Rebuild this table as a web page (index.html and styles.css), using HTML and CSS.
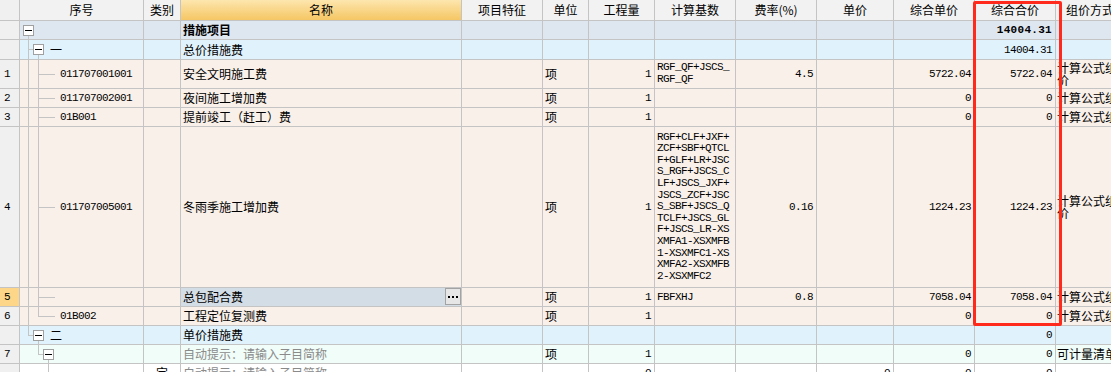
FILE: index.html
```html
<!DOCTYPE html>
<html lang="zh-CN">
<head>
<meta charset="utf-8">
<title>措施项目</title>
<link rel="stylesheet" href="styles.css">
</head>
<body>
<div class="grid">
  <div class="row hd">
    <div class="c rn"></div>
    <div class="c ctr">序号</div>
    <div class="c ctr">类别</div>
    <div class="c ctr hname">名称</div>
    <div class="c ctr">项目特征</div>
    <div class="c ctr">单位</div>
    <div class="c ctr">工程量</div>
    <div class="c ctr">计算基数</div>
    <div class="c ctr">费率(%)</div>
    <div class="c ctr">单价</div>
    <div class="c ctr">综合单价</div>
    <div class="c ctr">综合合价</div>
    <div class="c ctr">组价方式</div>
  </div>

  <div class="row lv0">
    <div class="c rn"></div>
    <div class="c sn"><i class="s bx dn"><b></b></i></div>
    <div class="c"></div>
    <div class="c"><strong>措施项目</strong></div>
    <div class="c"></div><div class="c"></div><div class="c"></div><div class="c"></div><div class="c"></div><div class="c"></div><div class="c"></div>
    <div class="c r m bold">14004.31</div>
    <div class="c zj"></div>
  </div>

  <div class="row lv1 h20">
    <div class="c rn"></div>
    <div class="c sn"><i class="s t"></i><i class="s bx dn"><b></b></i><span class="tx gt">一</span></div>
    <div class="c"></div>
    <div class="c">总价措施费</div>
    <div class="c"></div><div class="c"></div><div class="c"></div><div class="c"></div><div class="c"></div><div class="c"></div><div class="c"></div>
    <div class="c r m">14004.31</div>
    <div class="c zj"></div>
  </div>

  <div class="row it h29">
    <div class="c rn m">1</div>
    <div class="c sn"><i class="s v"></i><i class="s t"></i><i class="h"></i><span class="tx m">011707001001</span></div>
    <div class="c"></div>
    <div class="c">安全文明施工费</div>
    <div class="c"></div>
    <div class="c">项</div>
    <div class="c r m">1</div>
    <div class="c m"><span class="calc">RGF_QF+JSCS_RGF_QF</span></div>
    <div class="c r m">4.5</div>
    <div class="c"></div>
    <div class="c r m">5722.04</div>
    <div class="c r m">5722.04</div>
    <div class="c zj wrap">计算公式组价</div>
  </div>

  <div class="row it">
    <div class="c rn m">2</div>
    <div class="c sn"><i class="s v"></i><i class="s t"></i><i class="h"></i><span class="tx m">011707002001</span></div>
    <div class="c"></div>
    <div class="c">夜间施工增加费</div>
    <div class="c"></div>
    <div class="c">项</div>
    <div class="c r m">1</div>
    <div class="c"></div><div class="c"></div><div class="c"></div>
    <div class="c r m">0</div>
    <div class="c r m">0</div>
    <div class="c zj">计算公式组价</div>
  </div>

  <div class="row it">
    <div class="c rn m">3</div>
    <div class="c sn"><i class="s v"></i><i class="s t"></i><i class="h"></i><span class="tx m">01B001</span></div>
    <div class="c"></div>
    <div class="c">提前竣工（赶工）费</div>
    <div class="c"></div>
    <div class="c">项</div>
    <div class="c r m">1</div>
    <div class="c"></div><div class="c"></div><div class="c"></div>
    <div class="c r m">0</div>
    <div class="c r m">0</div>
    <div class="c zj">计算公式组价</div>
  </div>

  <div class="row it h161">
    <div class="c rn m">4</div>
    <div class="c sn"><i class="s v"></i><i class="s t"></i><i class="h"></i><span class="tx m">011707005001</span></div>
    <div class="c"></div>
    <div class="c">冬雨季施工增加费</div>
    <div class="c"></div>
    <div class="c">项</div>
    <div class="c r m">1</div>
    <div class="c m"><span class="calc">RGF+CLF+JXF+ZCF+SBF+QTCLF+GLF+LR+JSCS_RGF+JSCS_CLF+JSCS_JXF+JSCS_ZCF+JSCS_SBF+JSCS_QTCLF+JSCS_GLF+JSCS_LR-XSXMFA1-XSXMFB1-XSXMFC1-XSXMFA2-XSXMFB2-XSXMFC2</span></div>
    <div class="c r m">0.16</div>
    <div class="c"></div>
    <div class="c r m">1224.23</div>
    <div class="c r m">1224.23</div>
    <div class="c zj wrap">计算公式组价</div>
  </div>

  <div class="row it">
    <div class="c rn m sel">5</div>
    <div class="c sn"><i class="s v"></i><i class="s t"></i><i class="h"></i></div>
    <div class="c"></div>
    <div class="c cur"><span>总包配合费</span><button class="more" type="button"><i></i><i></i><i></i></button></div>
    <div class="c"></div>
    <div class="c">项</div>
    <div class="c r m">1</div>
    <div class="c m">FBFXHJ</div>
    <div class="c r m">0.8</div>
    <div class="c"></div>
    <div class="c r m">7058.04</div>
    <div class="c r m">7058.04</div>
    <div class="c zj">计算公式组价</div>
  </div>

  <div class="row it">
    <div class="c rn m">6</div>
    <div class="c sn"><i class="s v"></i><i class="s l"></i><i class="h"></i><span class="tx m">01B002</span></div>
    <div class="c"></div>
    <div class="c">工程定位复测费</div>
    <div class="c"></div>
    <div class="c">项</div>
    <div class="c r m">1</div>
    <div class="c"></div><div class="c"></div><div class="c"></div>
    <div class="c r m">0</div>
    <div class="c r m">0</div>
    <div class="c zj">计算公式组价</div>
  </div>

  <div class="row lv1">
    <div class="c rn"></div>
    <div class="c sn"><i class="s l"></i><i class="s bx dn"><b></b></i><span class="tx gt">二</span></div>
    <div class="c"></div>
    <div class="c">单价措施费</div>
    <div class="c"></div><div class="c"></div><div class="c"></div><div class="c"></div><div class="c"></div><div class="c"></div><div class="c"></div>
    <div class="c r m">0</div>
    <div class="c zj"></div>
  </div>

  <div class="row sub">
    <div class="c rn m">7</div>
    <div class="c sn"><i class="s"></i><i class="s l"></i><i class="s bx dn"><b></b></i></div>
    <div class="c"></div>
    <div class="c hint">自动提示：请输入子目简称</div>
    <div class="c"></div>
    <div class="c">项</div>
    <div class="c r m">1</div>
    <div class="c"></div><div class="c"></div><div class="c"></div>
    <div class="c r m">0</div>
    <div class="c r m">0</div>
    <div class="c zj">可计量清单</div>
  </div>

  <div class="row wh">
    <div class="c rn m"></div>
    <div class="c sn"><i class="s"></i><i class="s"></i><i class="s l"></i><i class="h"></i></div>
    <div class="c ctr">定</div>
    <div class="c hint">自动提示：请输入子目简称</div>
    <div class="c"></div>
    <div class="c"></div>
    <div class="c r m">0</div>
    <div class="c"></div><div class="c"></div>
    <div class="c r m">0</div>
    <div class="c r m">0</div>
    <div class="c r m">0</div>
    <div class="c zj"></div>
  </div>

  <div class="mark"></div>
</div>
</body>
</html>
```

FILE: styles.css
```css
html, body {
  margin: 0;
  padding: 0;
  width: 1111px;
  height: 372px;
  overflow: hidden;
  background: #ffffff;
}

.grid {
  position: relative;
  width: 1125px;
  font-family: "Noto Sans CJK SC", "Noto Sans", sans-serif;
  font-size: 12px;
  color: #000;
}

.row {
  display: grid;
  grid-template-columns: 20px 124px 37px 281px 81px 46px 66px 81px 81px 77px 81px 81px 69px;
  height: 19px;
  box-sizing: border-box;
  border-bottom: 1px solid #c4c4c4;
}

.row.hd { height: 21px; background: #f2f2f2; }
.row.h20 { height: 20px; }
.row.h29 { height: 29px; }
.row.h161 { height: 161px; }

.lv0 { background: #dee6f0; }
.lv1 { background: #e0f3fd; }
.it { background: #f9f0ea; }
.sub { background: #f1fdf8; }
.wh { background: #ffffff; }

.c {
  box-sizing: border-box;
  border-right: 1px solid #c4c4c4;
  display: flex;
  align-items: center;
  padding: 0 2px;
  overflow: hidden;
  white-space: nowrap;
  min-width: 0;
  line-height: 14px;
}

.c.r { justify-content: flex-end; padding-right: 3px; }
.c.ctr { justify-content: center; padding: 0; }

.hname { background: linear-gradient(#fde6ae, #f5c664); }

.rn { background: #f0f0f0; padding-left: 4px; }
.rn.sel { background: #fdd68a; }

.m {
  font-family: "Liberation Mono", "DejaVu Sans Mono", monospace;
  font-size: 11px;
  letter-spacing: -0.6px;
}
.bold { font-weight: bold; letter-spacing: 0.3px; }

.calc {
  display: block;
  width: 74px;
  white-space: normal;
  word-break: break-all;
  line-height: 11.6px;
}

.zj { padding-left: 1px; }
.zj.wrap { white-space: normal; line-height: 12px; }

.hint { color: #8a8a8a; }

.cur { background: #d3dde6; padding-right: 0; }
.more {
  margin-left: auto;
  width: 16px;
  height: 17px;
  box-sizing: border-box;
  border: 1px solid #a3a3a3;
  background: #e6e6e6;
  padding: 0;
  display: flex;
  align-items: center;
  justify-content: center;
  gap: 2px;
  align-self: flex-start;
  margin-top: 0;
}
.more i { width: 2px; height: 2px; background: #000; display: block; }

/* tree guides */
.sn {
  padding: 0 0 0 3px;
  align-items: stretch;
  --lc: #c4c4c4;
}
.s { display: block; width: 10px; flex: none; }
.h {
  display: block;
  width: 12px;
  flex: none;
  background: linear-gradient(var(--lc), var(--lc)) 0 50% / 100% 1px no-repeat;
}
.v { background: linear-gradient(var(--lc), var(--lc)) 5px 0 / 1px 100% no-repeat; }
.t {
  background:
    linear-gradient(var(--lc), var(--lc)) 5px 0 / 1px 100% no-repeat,
    linear-gradient(var(--lc), var(--lc)) 5px 50% / 5px 1px no-repeat;
}
.l {
  background:
    linear-gradient(var(--lc), var(--lc)) 5px 0 / 1px 50% no-repeat,
    linear-gradient(var(--lc), var(--lc)) 5px 50% / 5px 1px no-repeat;
}
.bx { display: flex; align-items: center; }
.bx.dn { background: linear-gradient(var(--lc), var(--lc)) 5px 100% / 1px 50% no-repeat; }
.bx b {
  width: 11px;
  height: 11px;
  flex: none;
  box-sizing: border-box;
  border: 1px solid #a0a0a0;
  background: #fff;
  display: flex;
  align-items: center;
  justify-content: center;
}
.bx b::after { content: ""; width: 7px; height: 1px; background: #000; }

.tx { align-self: center; margin-left: 5px; }
.tx.gt { margin-left: 7px; }

.mark {
  position: absolute;
  left: 973px;
  top: 1px;
  width: 89px;
  height: 325px;
  box-sizing: border-box;
  border: 3px solid #ff2a1c;
  border-radius: 2px;
  pointer-events: none;
}
```
